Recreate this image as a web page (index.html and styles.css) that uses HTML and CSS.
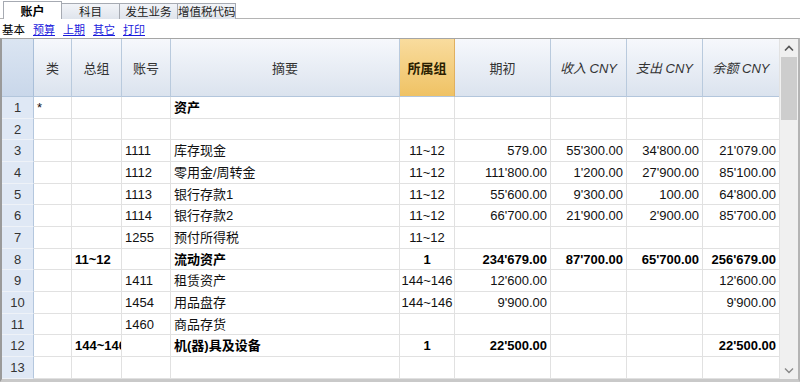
FILE: index.html
```html
<!DOCTYPE html>
<html lang="zh">
<head>
<meta charset="utf-8">
<link rel="stylesheet" href="styles.css">
</head>
<body>
<div class="app">
  <div class="tabs">
    <div class="tab active">账户</div>
    <div class="tab">科目</div>
    <div class="tab">发生业务</div>
    <div class="tab">增值税代码</div>
  </div>
  <div class="views">
    <span class="cur">基本</span>
    <a href="#">预算</a>
    <a href="#">上期</a>
    <a href="#">其它</a>
    <a href="#">打印</a>
  </div>
  <div class="frame">
    <div class="grid">
      <div class="h corner"></div>
      <div class="h">类</div>
      <div class="h">总组</div>
      <div class="h">账号</div>
      <div class="h">摘要</div>
      <div class="h sel">所属组</div>
      <div class="h">期初</div>
      <div class="h it">收入 CNY</div>
      <div class="h it">支出 CNY</div>
      <div class="h it">余额 CNY</div>

      <div class="n">1</div><div class="c">*</div><div class="c"></div><div class="c"></div><div class="c b">资产</div><div class="c m"></div><div class="c r"></div><div class="c r"></div><div class="c r"></div><div class="c r"></div>
      <div class="n">2</div><div class="c"></div><div class="c"></div><div class="c"></div><div class="c"></div><div class="c m"></div><div class="c r"></div><div class="c r"></div><div class="c r"></div><div class="c r"></div>
      <div class="n">3</div><div class="c"></div><div class="c"></div><div class="c">1111</div><div class="c">库存现金</div><div class="c m">11~12</div><div class="c r">579.00</div><div class="c r">55'300.00</div><div class="c r">34'800.00</div><div class="c r">21'079.00</div>
      <div class="n">4</div><div class="c"></div><div class="c"></div><div class="c">1112</div><div class="c">零用金/周转金</div><div class="c m">11~12</div><div class="c r">111'800.00</div><div class="c r">1'200.00</div><div class="c r">27'900.00</div><div class="c r">85'100.00</div>
      <div class="n">5</div><div class="c"></div><div class="c"></div><div class="c">1113</div><div class="c">银行存款1</div><div class="c m">11~12</div><div class="c r">55'600.00</div><div class="c r">9'300.00</div><div class="c r">100.00</div><div class="c r">64'800.00</div>
      <div class="n">6</div><div class="c"></div><div class="c"></div><div class="c">1114</div><div class="c">银行存款2</div><div class="c m">11~12</div><div class="c r">66'700.00</div><div class="c r">21'900.00</div><div class="c r">2'900.00</div><div class="c r">85'700.00</div>
      <div class="n">7</div><div class="c"></div><div class="c"></div><div class="c">1255</div><div class="c">预付所得税</div><div class="c m">11~12</div><div class="c r"></div><div class="c r"></div><div class="c r"></div><div class="c r"></div>
      <div class="n">8</div><div class="c"></div><div class="c b">11~12</div><div class="c"></div><div class="c b">流动资产</div><div class="c m b">1</div><div class="c r b">234'679.00</div><div class="c r b">87'700.00</div><div class="c r b">65'700.00</div><div class="c r b">256'679.00</div>
      <div class="n">9</div><div class="c"></div><div class="c"></div><div class="c">1411</div><div class="c">租赁资产</div><div class="c m">144~146</div><div class="c r">12'600.00</div><div class="c r"></div><div class="c r"></div><div class="c r">12'600.00</div>
      <div class="n">10</div><div class="c"></div><div class="c"></div><div class="c">1454</div><div class="c">用品盘存</div><div class="c m">144~146</div><div class="c r">9'900.00</div><div class="c r"></div><div class="c r"></div><div class="c r">9'900.00</div>
      <div class="n">11</div><div class="c"></div><div class="c"></div><div class="c">1460</div><div class="c">商品存货</div><div class="c m"></div><div class="c r"></div><div class="c r"></div><div class="c r"></div><div class="c r"></div>
      <div class="n">12</div><div class="c"></div><div class="c b clip">144~146</div><div class="c"></div><div class="c b">机(器)具及设备</div><div class="c m b">1</div><div class="c r b">22'500.00</div><div class="c r"></div><div class="c r"></div><div class="c r b">22'500.00</div>
      <div class="n">13</div><div class="c"></div><div class="c"></div><div class="c"></div><div class="c"></div><div class="c m"></div><div class="c r"></div><div class="c r"></div><div class="c r"></div><div class="c r"></div>
    </div>
    <div class="vscroll">
      <div class="arrow"><svg width="10" height="7" viewBox="0 0 10 7"><path d="M1 5.5 L5 1.5 L9 5.5" fill="none" stroke="#555" stroke-width="1.6"/></svg></div>
      <div class="track"><div class="thumb"></div></div>
      <div class="arrow"><svg width="10" height="7" viewBox="0 0 10 7"><path d="M1 1.5 L5 5.5 L9 1.5" fill="none" stroke="#888" stroke-width="1.4"/></svg></div>
    </div>
  </div>
</div>
</body>
</html>
```
FILE: styles.css
```css
html, body {
  margin: 0;
  padding: 0;
  background: #ffffff;
}
body {
  width: 800px;
  height: 382px;
  overflow: hidden;
  font-family: "Liberation Sans", "Noto Sans CJK SC", sans-serif;
  font-size: 13px;
  color: #000;
}
.app {
  display: flex;
  flex-direction: column;
  height: 382px;
}
.tabs {
  display: flex;
  align-items: flex-end;
  height: 18px;
  padding-left: 3px;
  border-bottom: 1px solid #b4b4b4;
  background: #fff;
}
.tab {
  height: 15px;
  margin-bottom: -1px;
  width: 57px;
  border: 1px solid #a6aab2;
  border-bottom: none;
  border-left: none;
  background: linear-gradient(#f2f4f8, #dfe4ec);
  font-family: "Noto Sans CJK SC", sans-serif;
  font-size: 11.5px;
  line-height: 15px;
  text-align: center;
  white-space: nowrap;
  overflow: hidden;
  color: #222;
  box-sizing: content-box;
}
.tab.active {
  height: 17px;
  width: 57px;
  border-left: 1px solid #a6aab2;
  background: #fff;
  font-size: 12px;
  font-weight: bold;
  color: #000;
  line-height: 18px;
}
.views {
  display: flex;
  gap: 8px;
  height: 19px;
  align-items: center;
  padding-left: 2px;
  font-family: "Noto Sans CJK SC", sans-serif;
  font-size: 11px;
  line-height: 16px;
}
.views .cur { color: #000; font-size: 11.5px; margin-right: 0; }
.views a { color: #1a1adc; text-decoration: underline; }
.frame {
  display: flex;
  flex: 1;
  border-top: 1px solid #a5a5a5;
  border-left: 2px solid #9a9a9a;
  border-bottom: 3px solid #c9c9c9;
  border-right: 2px solid #b4b4b4;
  overflow: hidden;
  min-height: 0;
}
.grid {
  display: grid;
  grid-template-columns: 32px 38px 50px 49px 229px 55px 96px 76px 76px 77px;
  grid-template-rows: 58px;
  grid-auto-rows: 21.67px;
  width: 778px;
  align-content: start;
  overflow: hidden;
}
.h {
  display: flex;
  align-items: center;
  justify-content: center;
  font-family: "Noto Sans CJK SC", sans-serif;
  font-size: 13px;
  color: #333;
  background: linear-gradient(#f6f8fc, #dbe3ee);
  border-right: 1px solid #b9cadd;
  border-bottom: 1px solid #b3c6dc;
  box-sizing: border-box;
}
.h.corner {
  background: linear-gradient(#dbe5f2, #c9d7ea);
  border-right: 1px solid #a9bfd9;
}
.h.it {
  font-style: italic;
  font-family: "Liberation Sans", "Noto Sans CJK SC", sans-serif;
}
.h.sel {
  background: linear-gradient(#f9dc9e, #efc264);
  color: #2a1e00;
  font-weight: bold;
  border-right: 1px solid #e0b060;
}
.n {
  background: #dfe8f5;
  border-right: 1px solid #b4c7de;
  border-bottom: 1px solid #eef2f8;
  text-align: center;
  color: #333;
  font-size: 13px;
  line-height: 21px;
  box-sizing: border-box;
}
.c {
  border-right: 1px solid #e1e1e1;
  border-bottom: 1px solid #e1e1e1;
  padding: 0 3px;
  line-height: 21px;
  white-space: nowrap;
  overflow: hidden;
  box-sizing: border-box;
  font-family: "Liberation Sans", "Noto Sans CJK SC", sans-serif;
  color: #111;
}
.c.r { text-align: right; }
.c.m { text-align: center; padding: 0 1px; }
.c.b { font-weight: bold; color: #000; }
.c.clip { text-overflow: clip; }
.vscroll {
  width: 18px;
  display: flex;
  flex-direction: column;
  background: #f0f0f0;
  border-left: 1px solid #e2e2e2;
}
.arrow {
  height: 18px;
  display: flex;
  align-items: center;
  justify-content: center;
}
.track {
  flex: 1;
  padding: 0 1px;
}
.thumb {
  height: 63px;
  background: #cdcdcd;
}
```
